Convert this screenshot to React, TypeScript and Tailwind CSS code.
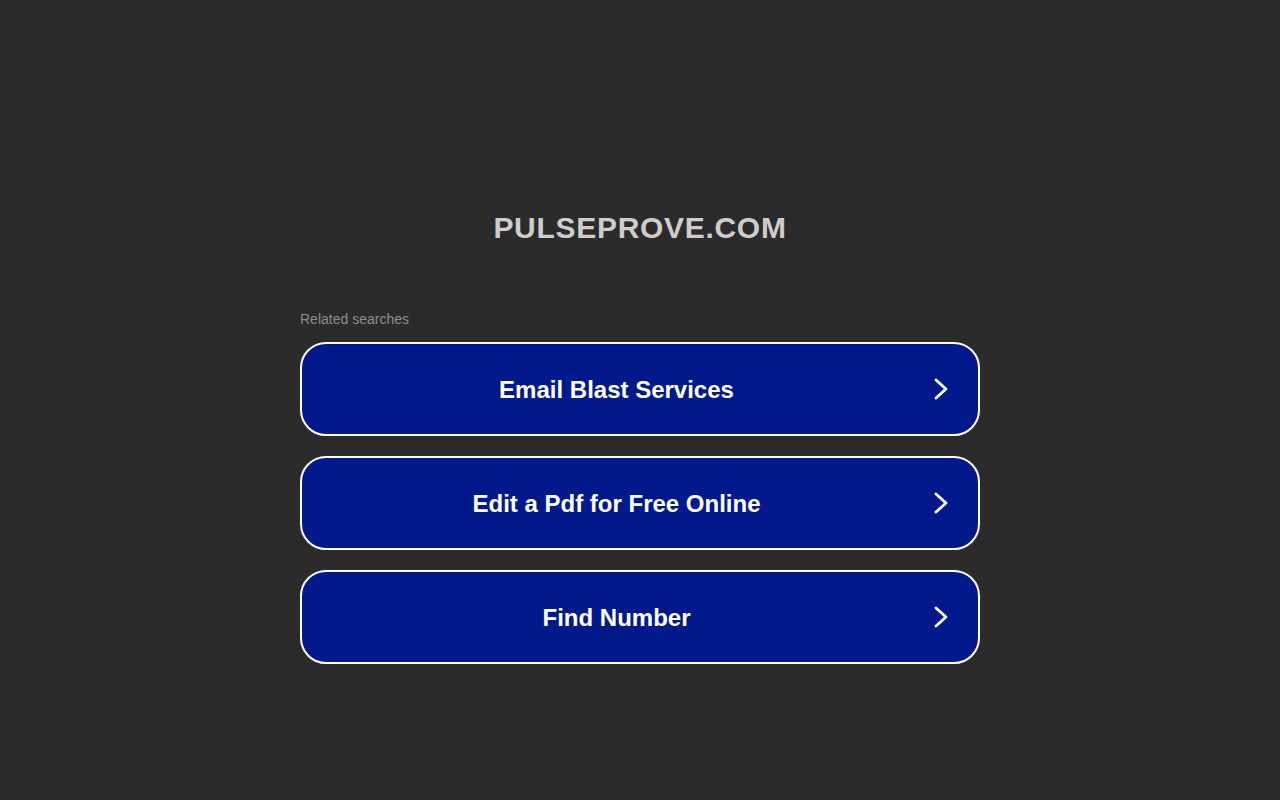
const searches = ['Email Blast Services', 'Edit a Pdf for Free Online', 'Find Number'];

function Chevron() {
  return (
    <svg width="20" height="24" viewBox="0 0 20 24" fill="none" className="shrink-0">
      <polyline points="5,3 15,12 5,21" stroke="white" strokeWidth="2.8" strokeLinecap="round" strokeLinejoin="round" />
    </svg>
  );
}

export default function App() {
  return (
    <div className="min-h-screen w-full bg-[#2b2b2b] font-['Liberation_Sans',Arial,sans-serif]">
      <div className="pt-[210px] text-center">
        <h1 className="text-[30px] leading-[36px] font-bold tracking-[0.7px] text-[#cdcdcd]">PULSEPROVE.COM</h1>
      </div>
      <div className="mx-auto mt-[63px] w-[680px]">
        <div className="text-[14px] leading-[20px] text-[#8c8c8c]">Related searches</div>
        <div className="mt-[13px] flex flex-col gap-[20px]">
          {searches.map((s) => (
            <a
              key={s}
              href="#"
              className="flex h-[94px] items-center rounded-[26px] border-2 border-white bg-[#02198b] pr-[27px] text-white"
            >
              <span className="flex-1 pt-[2px] text-center text-[24px] font-bold">{s}</span>
              <Chevron />
            </a>
          ))}
        </div>
      </div>
    </div>
  );
}
